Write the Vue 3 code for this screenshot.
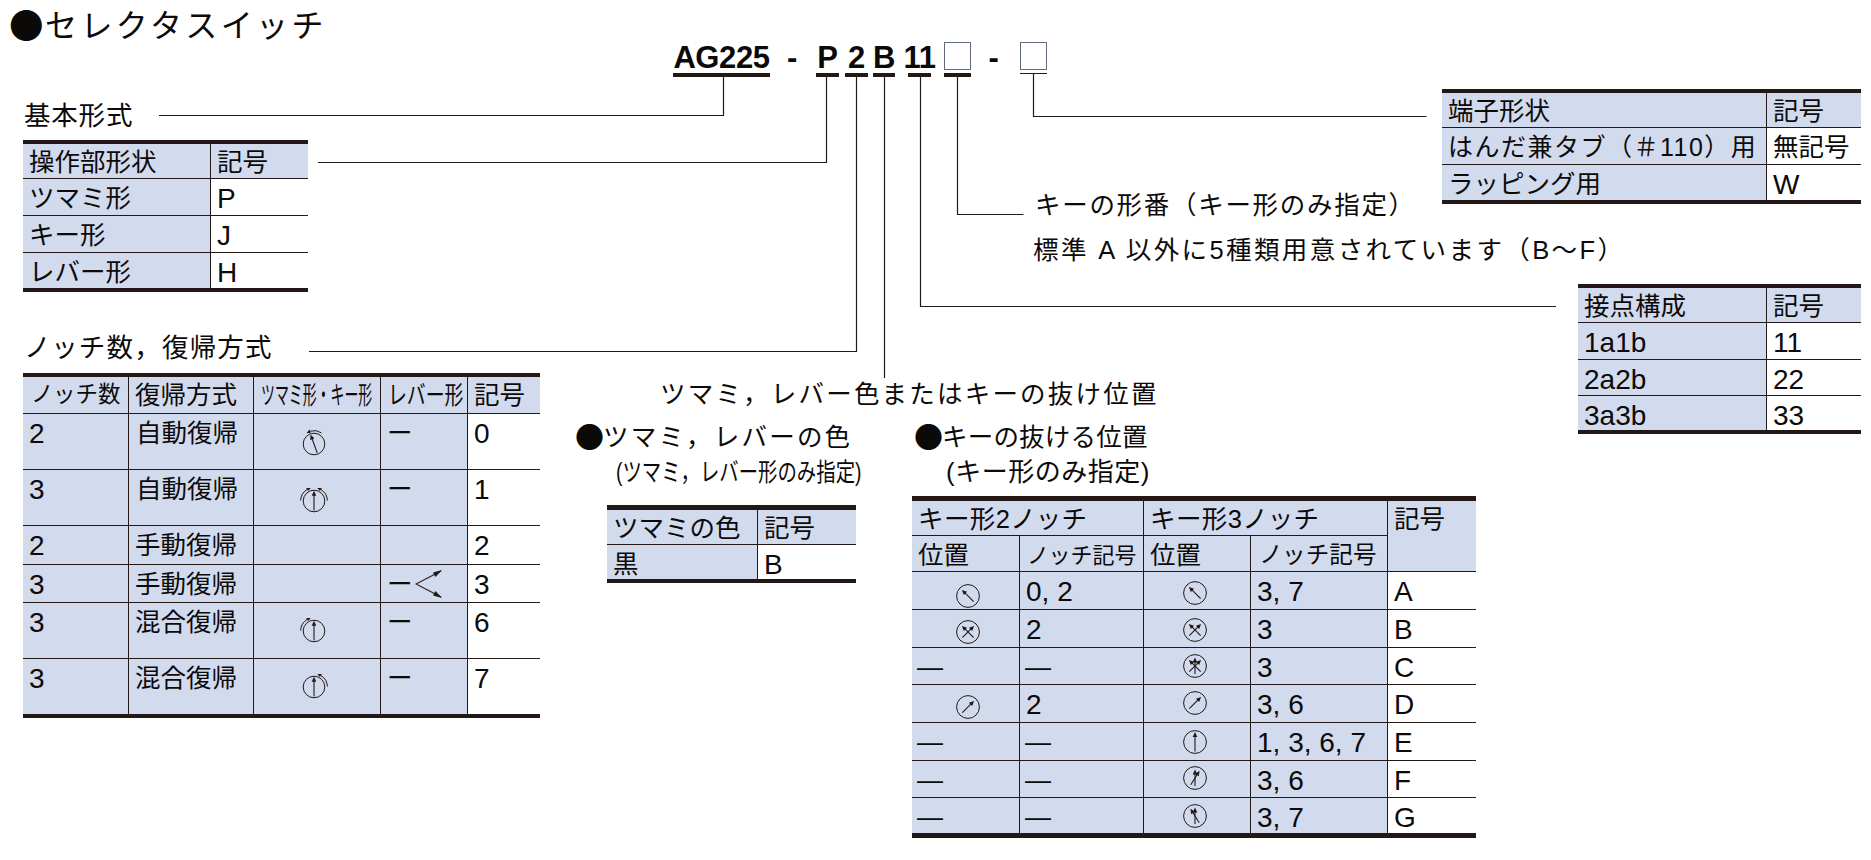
<script setup>
const lat = (t, cls = '') => ({ t, cls: 'n ' + cls })
const txt = (t, cls = '') => ({ t, cls })

const COMMA = '\uFF0C'
const LP = '\uFF08'
const RP = '\uFF09'
const WAVE = '\uFF5E'
const SHARP = '\uFF03'

const labels = {
  notch: `ノッチ数${COMMA}復帰方式`,
  keyno: `キーの形番${LP}キー形のみ指定${RP}`,
  std: `標準 A 以外に5種類用意されています${LP}B${WAVE}F${RP}`,
  color: `ツマミ${COMMA}レバー色またはキーの抜け位置`,
  hColor: `ツマミ${COMMA}レバーの色`,
  sColor: `(ツマミ${COMMA}レバー形のみ指定)`,
  sKey: '(キー形のみ指定)'
}

function arc(from, to, r = 13.4) {
  const p = (a, rr = r) => {
    const s = (a * Math.PI) / 180
    return [rr * Math.sin(s), -rr * Math.cos(s)]
  }
  const [x1, y1] = p(from)
  const [x2, y2] = p(to)
  const sweep = to > from ? 1 : 0
  const large = Math.abs(to - from) > 180 ? 1 : 0
  const dir = to > from ? 1 : -1
  const [bx, by] = p(to - dir * 17)
  const [ox, oy] = p(to - dir * 17, r + 1.8)
  const [ix, iy] = p(to - dir * 17, r - 1.8)
  return {
    d: `M${x1.toFixed(2)} ${y1.toFixed(2)}A${r} ${r} 0 ${large} ${sweep} ${bx.toFixed(2)} ${by.toFixed(2)}`,
    head: `${x2.toFixed(2)},${y2.toFixed(2)} ${ox.toFixed(2)},${oy.toFixed(2)} ${ix.toFixed(2)},${iy.toFixed(2)}`
  }
}

const icon = (arrows, opts = {}) => ({
  arrows,
  r: opts.r ?? 11.4,
  len: opts.len ?? 8,
  arcs: (opts.arcs ?? []).map((a) => arc(a[0], a[1])),
  dx: opts.dx ?? 0,
  dy: opts.dy ?? 0
})
const ic = (arrows, opts) => ({ icon: icon(arrows, opts), cls: 'has-icon' })

const ARC_L = [-88, -14]
const ARC_R = [88, 14]
const small = 10.8

const tables = [
  {
    id: 't-basic',
    cols: [188, 97],
    rows: [35, 37, 37, 35],
    blue: [0],
    cells: [
      [txt('操作部形状', 'blue'), txt('記号', 'blue')],
      [txt('ツマミ形'), lat('P')],
      [txt('キー形'), lat('J')],
      [txt('レバー形'), lat('H')]
    ]
  },
  {
    id: 't-notch',
    cols: [106, 125, 127, 87, 72],
    rows: [37, 56, 56, 39, 38, 56, 55],
    blue: [0, 1, 2, 3],
    cells: [
      [txt('ノッチ数', 'blue narrow'), txt('復帰方式', 'blue'), txt('ツマミ形・キー形', 'blue sq58'), txt('レバー形', 'blue sq75'), txt('記号', 'blue')],
      [lat('2'), txt('自動復帰', 'pad7'), ic([-20], { r: small, arcs: [[34, -34]], len: 9.4, dx: -3, dy: 2 }), txt('ー'), lat('0')],
      [lat('3'), txt('自動復帰', 'pad7'), ic([0], { r: small, arcs: [ARC_L, ARC_R], len: 9.6, dx: -3, dy: 3 }), txt('ー'), lat('1')],
      [lat('2'), txt('手動復帰'), txt(''), txt(''), lat('2')],
      [lat('3'), txt('手動復帰'), txt(''), { t: 'ー', fork: true, cls: '' }, lat('3')],
      [lat('3'), txt('混合復帰'), ic([0], { r: small, arcs: [ARC_L], len: 9.6, dx: -3 }), txt('ー'), lat('6')],
      [lat('3'), txt('混合復帰'), ic([0], { r: small, arcs: [ARC_R], len: 9.6, dx: -3 }), txt('ー'), lat('7')]
    ]
  },
  {
    id: 't-color',
    cols: [151, 98],
    rows: [35, 34],
    blue: [0],
    cells: [
      [txt('ツマミの色', 'blue'), txt('記号', 'blue')],
      [txt('黒'), lat('B')]
    ]
  },
  {
    id: 't-key',
    cols: [108, 124, 107, 137, 88],
    rows: [35, 36, 38, 38, 37, 38, 38, 37, 35],
    blue: [0, 1, 2, 3],
    cells: [
      [
        { t: 'キー形2ノッチ', cls: 'blue wide', span: 2 },
        { t: 'キー形3ノッチ', cls: 'blue wide', span: 2 },
        { t: '記号', cls: 'blue', rows: 2 }
      ],
      [txt('位置', 'blue'), txt('ノッチ記号', 'blue tight'), txt('位置', 'blue'), txt('ノッチ記号', 'blue mid')],
      [ic([-45], { dx: 2, dy: 5 }), lat('0, 2'), ic([-45], { dx: -2, dy: 2 }), lat('3, 7'), lat('A')],
      [ic([-45, 45], { dx: 2, dy: 3 }), lat('2'), ic([-45, 45], { dx: -2, dy: 1 }), lat('3'), lat('B')],
      [txt('—', 'em'), txt('—', 'em'), ic([-45, 0, 45], { dx: -2 }), lat('3'), lat('C')],
      [ic([45], { dx: 2, dy: 3 }), lat('2'), ic([45], { dx: -2, dy: -1 }), lat('3, 6'), lat('D')],
      [txt('—', 'em'), txt('—', 'em'), ic([0], { dx: -2, len: 9.5 }), lat('1, 3, 6, 7'), lat('E')],
      [txt('—', 'em'), txt('—', 'em'), ic([0, 32], { dx: -2, dy: -1 }), lat('3, 6'), lat('F')],
      [txt('—', 'em'), txt('—', 'em'), ic([0, -32], { dx: -2 }), lat('3, 7'), lat('G')]
    ]
  },
  {
    id: 't-term',
    cols: [325, 94],
    rows: [35, 37, 35],
    blue: [0],
    cells: [
      [txt('端子形状', 'blue'), txt('記号', 'blue')],
      [txt(`はんだ兼タブ${LP}${SHARP}110${RP}用`, 'term'), txt('無記号')],
      [txt('ラッピング用'), lat('W')]
    ]
  },
  {
    id: 't-contact',
    cols: [189, 94],
    rows: [35, 37, 36, 34],
    blue: [0],
    cells: [
      [txt('接点構成', 'blue'), txt('記号', 'blue')],
      [lat('1a1b'), lat('11')],
      [lat('2a2b'), lat('22')],
      [lat('3a3b'), lat('33')]
    ]
  }
]

const leaders = [
  'M159 115.5H723.5V77',
  'M318 162.5H826.5V77',
  'M309 351.5H856.5V77',
  'M884.5 77V378',
  'M920.5 77V306.5H1556',
  'M957.5 77V214.5H1023.5',
  'M1033.5 74V116.5H1426.5'
]

const parts = [
  { t: 'AG225', w: 97, ml: 0, bar: true },
  { t: '-', w: 10, ml: 17 },
  { t: 'P', w: 23, ml: 19, bar: true },
  { t: '2', w: 23, ml: 6, bar: true },
  { t: 'B', w: 22, ml: 5, bar: true },
  { t: '11', w: 23, ml: 13, bar: true },
  { box: true, w: 27, ml: 13, bar: true },
  { t: '-', w: 9, ml: 18 },
  { box: true, w: 27, ml: 22, thin: true }
]

function gridStyle(table) {
  return {
    gridTemplateColumns: table.cols.map((c) => c + 'px').join(' '),
    gridTemplateRows: table.rows.map((r) => r + 'px').join(' ')
  }
}

function cellList(table) {
  const out = []
  table.cells.forEach((row, i) => {
    let col = 0
    row.forEach((c) => {
      const span = c.span ?? 1
      const rowSpan = c.rows ?? 1
      const lastRow = i + rowSpan >= table.rows.length
      const lastCol = col + span >= table.cols.length
      const white = i > 0 && !table.blue.includes(col)
      out.push({
        ...c,
        key: i + '-' + col,
        style: {
          gridColumn: `${col + 1} / span ${span}`,
          gridRow: `${i + 1} / span ${rowSpan}`
        },
        state: [white ? 'white' : 'blue', i === 0 ? 'head' : '', lastRow ? 'no-b' : '', lastCol ? 'no-r' : '']
      })
      col += span
    })
  })
  return out
}
</script>

<template>
  <div class="sheet">
    <h1 class="node title"><span class="big-dot">●</span>セレクタスイッチ</h1>

    <div class="node code">
      <div
        v-for="(p, i) in parts"
        :key="i"
        class="part"
        :class="{ bar: p.bar, thin: p.thin }"
        :style="{ width: p.w + 'px', marginLeft: p.ml + 'px' }"
      >
        <span v-if="p.box" class="box"></span>
        <span v-else>{{ p.t }}</span>
      </div>
    </div>

    <svg class="leaders" width="1871" height="860" viewBox="0 0 1871 860">
      <path v-for="d in leaders" :key="d" :d="d" />
    </svg>

    <div class="node label l-basic">基本形式</div>
    <div class="node label l-notch">{{ labels.notch }}</div>
    <div class="node label l-keyno">{{ labels.keyno }}</div>
    <div class="node label l-std">{{ labels.std }}</div>
    <div class="node label l-color">{{ labels.color }}</div>
    <div class="node label l-h-color"><span class="dot">●</span>{{ labels.hColor }}</div>
    <div class="node label l-s-color">{{ labels.sColor }}</div>
    <div class="node label l-h-key"><span class="dot">●</span>キーの抜ける位置</div>
    <div class="node label l-s-key">{{ labels.sKey }}</div>

    <div v-for="table in tables" :key="table.id" class="node tbl" :class="table.id" :style="gridStyle(table)">
      <div
        v-for="c in cellList(table)"
        :key="c.key"
        class="cell"
        :class="[c.cls, c.state]"
        :style="c.style"
      >
        <svg
          v-if="c.icon"
          class="dial"
          width="36"
          height="36"
          viewBox="-18 -18 36 36"
          :style="{ transform: `translate(${c.icon.dx}px, ${c.icon.dy}px)` }"
        >
          <circle :r="c.icon.r" class="ring" />
          <g v-for="a in c.icon.arrows" :key="a" :transform="`rotate(${a})`">
            <line x1="0" :y1="c.icon.len" x2="0" :y2="-c.icon.len + 3" class="shaft" />
            <polygon :points="`0,${-c.icon.len - 0.6} -2.3,${-c.icon.len + 4.4} 2.3,${-c.icon.len + 4.4}`" class="tip" />
          </g>
          <g v-for="(ar, n) in c.icon.arcs" :key="n">
            <path :d="ar.d" class="ring" />
            <polygon :points="ar.head" class="tip" />
          </g>
        </svg>
        <template v-else>
          <span class="inner">{{ c.t }}</span>
          <svg v-if="c.fork" class="fork" width="36" height="38" viewBox="0 0 36 38">
            <path d="M26 6L1 19L26 32" class="shaft" />
            <polygon points="27,5 18,7.5 20.5,12" class="tip" />
            <polygon points="27,33 18,30.5 20.5,26" class="tip" />
          </svg>
        </template>
      </div>
    </div>
  </div>
</template>

<style>
html,
body {
  margin: 0;
  background: #fff;
}
</style>

<style scoped>
.sheet {
  position: relative;
  width: 1871px;
  height: 860px;
  overflow: hidden;
  background: #fff;
  color: #0c0a09;
  font-family: "Liberation Sans", "Noto Sans CJK JP", sans-serif;
  font-size: 25.5px;
}
.node {
  position: absolute;
  white-space: nowrap;
}
.leaders {
  position: absolute;
  left: 0;
  top: 0;
  pointer-events: none;
}
.leaders path {
  fill: none;
  stroke: #231815;
  stroke-width: 1.2;
}
.title {
  left: 9px;
  top: 1px;
  margin: 0;
  font-size: 32px;
  font-weight: 400;
  line-height: 42px;
  letter-spacing: 3.4px;
}
.big-dot,
.dot {
  position: relative;
  font-family: "Noto Sans CJK JP", sans-serif;
  letter-spacing: 0;
}
.big-dot {
  top: 2px;
  font-size: 34.5px;
  line-height: 42px;
  margin-right: 1.5px;
}
.dot {
  top: 2px;
  font-size: 29px;
  margin-right: -1px;
}
.code {
  left: 673px;
  top: 42px;
  display: flex;
  font-size: 31px;
  font-weight: 700;
  letter-spacing: -0.4px;
}
.part {
  height: 31px;
  display: flex;
  justify-content: center;
  line-height: 31px;
}
.part.bar {
  border-bottom: 4px solid #231815;
}
.part.thin {
  border-bottom: 1px solid #231815;
}
.box {
  display: block;
  box-sizing: border-box;
  width: 27px;
  height: 28px;
  border: 1px solid #5f6b7c;
}
.label {
  line-height: 36px;
}
.l-basic {
  left: 24px;
  top: 98px;
  font-size: 26.5px;
  letter-spacing: 0.8px;
}
.l-notch {
  left: 24px;
  top: 330px;
  font-size: 26.5px;
  letter-spacing: 1.2px;
}
.l-keyno {
  left: 1035px;
  top: 187px;
  letter-spacing: 1.7px;
}
.l-std {
  left: 1033px;
  top: 232px;
  letter-spacing: 2.4px;
}
.l-color {
  left: 660px;
  top: 376px;
  letter-spacing: 2.2px;
}
.l-h-color {
  left: 575px;
  top: 415px;
  letter-spacing: 2.2px;
}
.l-s-color {
  left: 616px;
  top: 454px;
  transform: scaleX(0.76);
  transform-origin: left center;
}
.l-h-key {
  left: 914px;
  top: 415px;
  letter-spacing: 0.2px;
}
.l-s-key {
  left: 946px;
  top: 454px;
  font-size: 26px;
  letter-spacing: 0.5px;
}
.tbl {
  display: grid;
  border-top: 4px solid #231815;
  border-bottom: 4px solid #231815;
}
.t-basic {
  left: 23px;
  top: 140px;
}
.t-notch {
  left: 23px;
  top: 373px;
}
.t-color {
  left: 607px;
  top: 505px;
  border-top-width: 5px;
}
.t-key {
  left: 912px;
  top: 496px;
  border-top-width: 5px;
  border-bottom-width: 5px;
}
.t-term {
  left: 1442px;
  top: 89px;
}
.t-contact {
  left: 1578px;
  top: 284px;
}
.cell {
  box-sizing: border-box;
  min-width: 0;
  padding-left: 6px;
  border-right: 1px solid #231815;
  border-bottom: 1px solid #231815;
  line-height: 39px;
  display: flex;
  align-items: flex-start;
}
.head {
  line-height: 36px;
}
.blue {
  background: #d2daee;
}
.white {
  background: #fff;
}
.no-b {
  border-bottom: 0;
}
.no-r {
  border-right: 0;
}
.n {
  font-size: 28px;
  line-height: 40px;
  padding-left: 6px;
}
.em {
  font-size: 26px;
  padding-left: 5px;
  line-height: 38px;
}
.pad7 {
  padding-left: 7px;
}
.wide {
  letter-spacing: 0.4px;
}
.narrow {
  font-size: 22.5px;
  padding-left: 8px;
}
.tight {
  font-size: 22px;
  padding-left: 7px;
}
.mid {
  font-size: 23.6px;
  padding-left: 8px;
}
.term {
  font-size: 25px;
  letter-spacing: 1.5px;
}
.sq58 .inner,
.sq75 .inner {
  display: inline-block;
  transform-origin: left center;
}
.sq58,
.sq75 {
  padding-left: 7px;
}
.sq58 .inner {
  transform: scaleX(0.545);
}
.sq75 .inner {
  transform: scaleX(0.74);
}
.has-icon {
  justify-content: center;
  align-items: center;
  padding-left: 0;
}
.dial {
  display: block;
  flex: none;
}
.fork {
  flex: none;
  display: block;
  margin-left: 2px;
}
.ring {
  fill: none;
  stroke: #231815;
  stroke-width: 1;
}
.shaft {
  fill: none;
  stroke: #231815;
  stroke-width: 1.1;
}
.tip {
  fill: #231815;
}
</style>
